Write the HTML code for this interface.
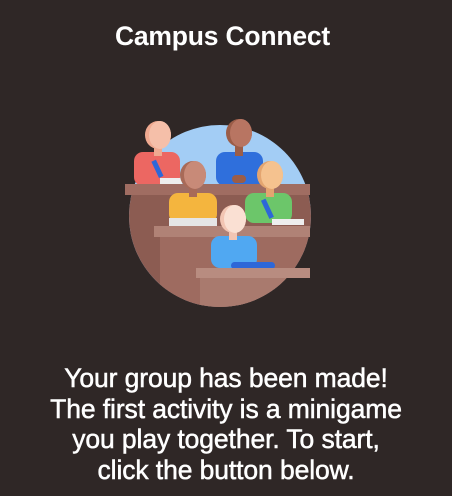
<!DOCTYPE html>
<html><head><meta charset="utf-8"><style>
html,body{margin:0;padding:0;}
body{width:452px;height:496px;background:#2f2726;position:relative;overflow:hidden;font-family:"Liberation Sans",sans-serif;color:#fff;}
h1{position:absolute;top:21px;left:0;width:445px;text-align:center;margin:0;font-size:26.5px;font-weight:bold;line-height:30px;letter-spacing:-0.2px;}
p{position:absolute;top:363px;left:0;width:452px;text-align:center;margin:0;font-size:26.5px;line-height:30.5px;-webkit-text-stroke:0.5px #fff;letter-spacing:-0.1px;}
svg{position:absolute;left:0;top:0;}
</style></head><body>
<h1>Campus Connect</h1>
<svg width="452" height="496" viewBox="0 0 452 496">
<defs><clipPath id="c"><circle cx="220" cy="216" r="91"/></clipPath></defs>
<circle cx="220" cy="216" r="91" fill="#a3cdf5"/>
<g clip-path="url(#c)">
<rect x="120" y="190" width="200" height="130" fill="#8c5c52"/>
</g>
<rect x="134" y="152" width="46" height="34" rx="9" fill="#ec6762"/>
<rect x="154" y="144" width="8" height="12" fill="#efa990"/>
<ellipse cx="158" cy="135" rx="13" ry="14" fill="#efa990"/>
<ellipse cx="160" cy="135" rx="11" ry="14" fill="#f5bfa9"/>
<rect x="155" y="160" width="5" height="18" transform="rotate(-25 157 169)" fill="#2d67d8"/>
<rect x="160" y="178" width="22" height="6" fill="#eee"/>
<rect x="216" y="152" width="47" height="34" rx="9" fill="#2f6fdc"/>
<rect x="235" y="144" width="8" height="12" fill="#9b5d48"/>
<ellipse cx="239" cy="133" rx="13" ry="14" fill="#9b5d48"/>
<ellipse cx="241" cy="133" rx="11" ry="14" fill="#b87562"/>
<rect x="232" y="175" width="14" height="8" rx="4" fill="#9b5d48"/>
<rect x="125" y="184" width="185" height="11" fill="#a06d62"/>
<rect x="169" y="193" width="48" height="30" rx="9" fill="#f4b53e"/>
<rect x="189" y="185" width="8" height="12" fill="#a86a58"/>
<ellipse cx="193" cy="175" rx="13" ry="14" fill="#a86a58"/>
<ellipse cx="195" cy="175" rx="11" ry="14" fill="#c88a78"/>
<rect x="169" y="218" width="48" height="8" fill="#e5e5e5"/>
<rect x="245" y="193" width="47" height="30" rx="9" fill="#6cc66a"/>
<rect x="266" y="185" width="8" height="12" fill="#e4a570"/>
<ellipse cx="270" cy="175" rx="13" ry="14" fill="#e4a570"/>
<ellipse cx="272" cy="175" rx="11" ry="14" fill="#f5c28f"/>
<rect x="265" y="199" width="5" height="20" transform="rotate(-25 267 209)" fill="#2d67d8"/>
<rect x="272" y="219" width="32" height="6" fill="#eee"/>
<rect x="154" y="226" width="156" height="11" fill="#b08276"/>
<g clip-path="url(#c)"><rect x="160" y="237" width="150" height="80" fill="#9e6b60"/></g>
<rect x="211" y="236" width="46" height="32" rx="9" fill="#50a8f2"/>
<rect x="229" y="228" width="8" height="12" fill="#f2c5b3"/>
<ellipse cx="233" cy="219" rx="13" ry="14" fill="#f2c5b3"/>
<ellipse cx="235" cy="219" rx="11" ry="14" fill="#fae0d3"/>
<rect x="231" y="262" width="44" height="7" rx="3.5" fill="#2d67d8"/>
<rect x="196" y="268" width="114" height="10" fill="#b88c80"/>
<g clip-path="url(#c)"><rect x="200" y="278" width="110" height="40" fill="#a97a6e"/></g>
</svg>
<p>Your group has been made!<br>The first activity is a minigame<br>you play together. To start,<br>click the button below.</p>
</body></html>
